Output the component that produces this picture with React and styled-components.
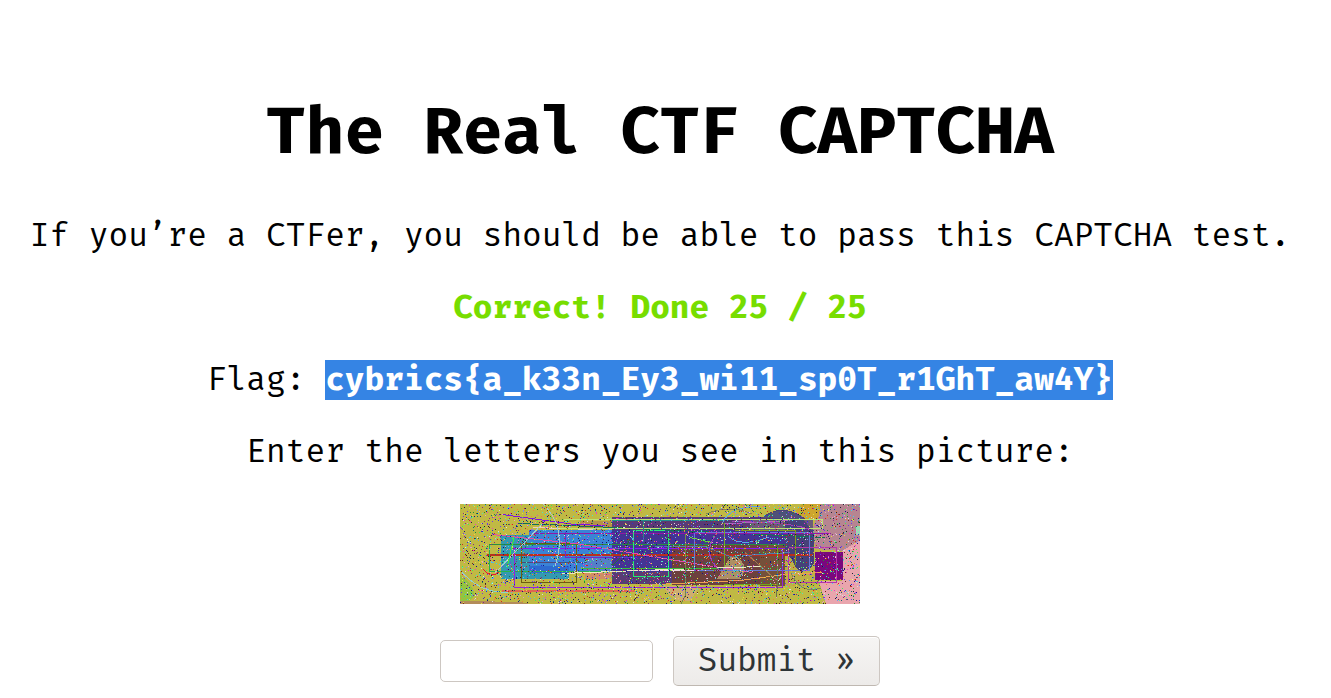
import React from "react";
import styled, { createGlobalStyle } from "styled-components";

const GlobalStyle = createGlobalStyle`
  body { margin: 0; background: #fff; overflow: hidden; }
`;

const Page = styled.main`
  box-sizing: border-box;
  width: 1320px;
  padding-top: 91px;
  display: flex;
  flex-direction: column;
  align-items: center;
  color: #000;
  font-family: "Fira Mono", "DejaVu Sans Mono", monospace;
  font-size: 32.83px;
`;

const Title = styled.h1`
  margin: 0 0 45px;
  font-size: 65.66px;
  line-height: 80px;
  font-weight: 700;
  white-space: pre;
`;

const Line = styled.p`
  margin: 0 0 32px;
  display: flex;
  height: 40px;
  line-height: 39px;
  white-space: pre;
  color: ${(p) => (p.$success ? "#7d0" : "inherit")};
  font-weight: ${(p) => (p.$success ? 700 : 400)};
`;

const Flag = styled.strong`
  background: #3584e4;
  color: #fff;
`;

const Picture = styled.svg`
  display: block;
  width: 400px;
  height: 100px;
  margin-bottom: 32px;
`;

const Form = styled.form`
  display: flex;
  align-items: center;
  gap: 20px;
`;

const Answer = styled.input`
  box-sizing: border-box;
  width: 213px;
  height: 42px;
  padding: 2px 6px;
  border: 1px solid #cdc7c2;
  border-radius: 5px;
  background: #fff;
  font: inherit;
  outline: none;
`;

const Submit = styled.button`
  box-sizing: border-box;
  width: 207px;
  height: 50px;
  padding: 0 0 3px;
  border: 1px solid #cdc7c2;
  border-bottom-color: #bfb8b1;
  border-radius: 5px;
  background: linear-gradient(#f6f5f4, #edebe9);
  box-shadow: inset 0 1px #fff;
  color: #2e3436;
  font: inherit;
`;

const COLORS = [
  "#d52323", "#258f34", "#2830d5", "#3bee55", "#ef35cb", "#38d6ee", "#202035",
  "#872a84", "#ddd", "#7134ef", "#e6df3a", "#166a72", "#702520", "#ee8635",
  "#6c9aee", "#121289", "#55e7bb", "#e89bc5",
];

// Speckles come from a fixed seed, so that every render draws the same noise.
function makeNoise(count) {
  let seed = 90173;
  const next = () => {
    seed = (seed + 0x6d2b79f5) >>> 0;
    let t = Math.imul(seed ^ (seed >>> 15), seed | 1);
    t ^= t + Math.imul(t ^ (t >>> 7), t | 61);
    return ((t ^ (t >>> 14)) >>> 0) / 4294967296;
  };
  const paths = COLORS.map(() => "");
  for (let i = 0; i < count; i += 1) {
    const x = Math.floor(next() * 400);
    const y = Math.floor(next() * 100);
    paths[Math.floor(next() * COLORS.length)] += `M${x} ${y}h1v1h-1z`;
  }
  return paths;
}

const NOISE = makeNoise(4800);

const BLOCKS = [
  [0, 0, 400, 100, "#c0b944"],
  [41, 31, 68, 44, "#339ab0"],
  [69, 26, 83, 42, "#3a83d6"],
  [69, 62, 40, 7, "#2e6bd0"],
  [125, 50, 27, 18, "#5480c8"],
  [125, 69, 27, 6, "#cf8f63"],
  [120, 17, 32, 8, "#b59347"],
  [152, 13, 201, 67, "#593b75"],
  [152, 26, 201, 42, "#443394"],
  [212, 41, 113, 40, "#6d413e"],
  [300, 41, 25, 41, "#75503a"],
  [290, 16, 63, 10, "#6b5b79"],
  [325, 52, 30, 30, "#bcb146"],
];

// Each entry: points, colour, stroke width.
const LINES = [
  ["27,51 353,51", "#b8301d", 2],
  ["42,87 176,87", "#df6650", 2],
  ["42,10.5 115,20.5 145,21.5", "#8111df", 1],
  ["57,19.5 132,22.5 365,33.5", "#147055", 1],
  ["73,23.5 133,25.5", "#edcdb8", 1],
  ["100,24.5 362,24.5 362,15.5 104,15.5", "#bce373", 1],
  ["29,40.5 325,40.5", "#268f41", 1],
  ["29.5,40.5 29.5,67.5 152,67.5", "#29b34b", 1],
  ["54,44.5 325,44.5", "#8b19f0", 1],
  ["61.5,39.5 116.5,39.5 116.5,78.5 61.5,78.5 61.5,39.5", "#6d5e10", 1],
  ["62,58.5 127,58.5", "#50497a", 1],
  ["105.5,27.5 105.5,53.5 177,53.5", "#6c2acb", 1],
  ["32,30.5 115,39.5 240,60.5 292,68.5", "#e54da5", 1],
  ["72,29.5 371,29.5", "#9216a5", 1],
  ["102,69.5 180,66.5 302,62.5", "#edeac5", 1],
  ["122,64.5 260,64.5", "#3fbd36", 1],
  ["205,26.5 173.5,26.5 173.5,72.5 208.5,72.5 208.5,26.5", "#27e874", 1],
  ["188,66.5 288,66.5", "#efd9e6", 1],
  ["195,80.5 280,76.5 325,70.5 362,68.5", "#eda04d", 1],
  ["328.5,43.5 376.5,43.5 376.5,78.5 328.5,78.5 328.5,43.5", "#b536aa", 1],
  ["234.5,28.5 234.5,66.5 349.5,66.5 349.5,28.5 234.5,28.5", "#6878d7", 1],
  ["264.5,18.5 264.5,62.5", "#76aa28", 1],
  ["230,33.5 252,38.5", "#6bd83d", 1],
  ["275,26.5 335.5,26.5 335.5,60.5", "#839d18", 1],
  ["317.5,41.5 317.5,80.5 264,80.5", "#6fa818", 1],
  ["54.5,44.5 54.5,83.5 322.5,83.5 322.5,45.5", "#9222e0", 1],
  ["152,16.5 265,16.5", "#218b8b", 1],
  ["265,19.5 300,18.5 330,16.5", "#ae60bd", 1],
  ["225,29.5 225,92.5 221,100", "#6f8a4c", 1],
  ["183,16.5 183,37.5", "#258887", 1],
  ["317,53.5 318,75.5 316,94.5", "#6b784b", 1],
  ["285,48.5 316,75.5", "#9c7950", 1],
  ["195,42.5 245,42.5 270,52.5 330,48.5", "#537eab", 1],
];

const CURVES = [
  ["M83 0Q108 24 95 62", "#a4cbd0"],
  ["M85 17L35 69", "#a4cbd0"],
  ["M0 66Q20 90 48 88", "#8ed0d2"],
  ["M23 65Q31 75 39 68", "#e51b32"],
  ["M54 34L47 63", "#43ef34"],
  ["M262 20Q270 1 300 3M268 32Q281 44 309 33", "#59a9e5"],
  ["M246 10Q270 0 292 10", "#898553"],
  ["M258 28Q240 49 260 67M272 18Q324 17 349 25", "#a342b6"],
  ["M331 69Q341 91 361 84", "#778a58"],
  ["M170 35Q158 61 151 61", "#28752d"],
];

function CaptchaPicture() {
  return (
    <Picture viewBox="0 0 400 100" shapeRendering="crispEdges" aria-label="CAPTCHA">
      {BLOCKS.map(([x, y, w, h, fill], i) => (
        <rect key={i} x={x} y={y} width={w} height={h} fill={fill} />
      ))}
      <path d="M361 0H400V36L382 47L355 45L353 24Z" fill="#b68591" />
      <path d="M400 36L382 47V77H359L366 100H400Z" fill="#e9a5ad" />
      <path d="M342 0H361L358 15H346L335 7Z" fill="#cda52e" />
      <path d="M302 14Q310 6 322 6Q337 6 344 16L354 29V59Q350 67 341 68Q335 64 331 54L325 49V17Z" fill="#464179" />
      <path d="M302 14Q323 -1 344 15Z" fill="#505078" />
      <path d="M257 75L270 53Q277 48 284 61V68L280 75Z" fill="#ad9064" />
      <rect x="355" y="48" width="28" height="28" fill="#7a087d" />
      <path d="M0 71Q11 77 15 91L10 97H0Z" fill="#95c440" />
      <path d="M10 97L60 98L70 100H0V97Z" fill="#b38c5a" />
      <path d="M203 82H240L230 97Q213 100 203 82Z" fill="#cfae6f" />
      <rect x="396" y="22" width="4" height="9" fill="#97dbb4" />
      {LINES.map(([points, stroke, width], i) => (
        <polyline key={i} points={points} fill="none" stroke={stroke} strokeWidth={width} />
      ))}
      {CURVES.map(([d, stroke], i) => (
        <path key={i} d={d} fill="none" stroke={stroke} />
      ))}
      {NOISE.map((d, i) => (
        <path key={i} d={d} fill={COLORS[i]} />
      ))}
    </Picture>
  );
}

export default function App() {
  return (
    <>
      <GlobalStyle />
      <Page>
        <Title>The Real CTF CAPTCHA</Title>
        <Line>If you’re a CTFer, you should be able to pass this CAPTCHA test.</Line>
        <Line $success>Correct! Done 25 / 25</Line>
        <Line>
          {"Flag: "}
          <Flag>{"cybrics{a_k33n_Ey3_wi11_sp0T_r1GhT_aw4Y}"}</Flag>
        </Line>
        <Line>Enter the letters you see in this picture:</Line>
        <CaptchaPicture />
        <Form onSubmit={(e) => e.preventDefault()}>
          <Answer aria-label="Letters" />
          <Submit type="submit">Submit »</Submit>
        </Form>
      </Page>
    </>
  );
}
